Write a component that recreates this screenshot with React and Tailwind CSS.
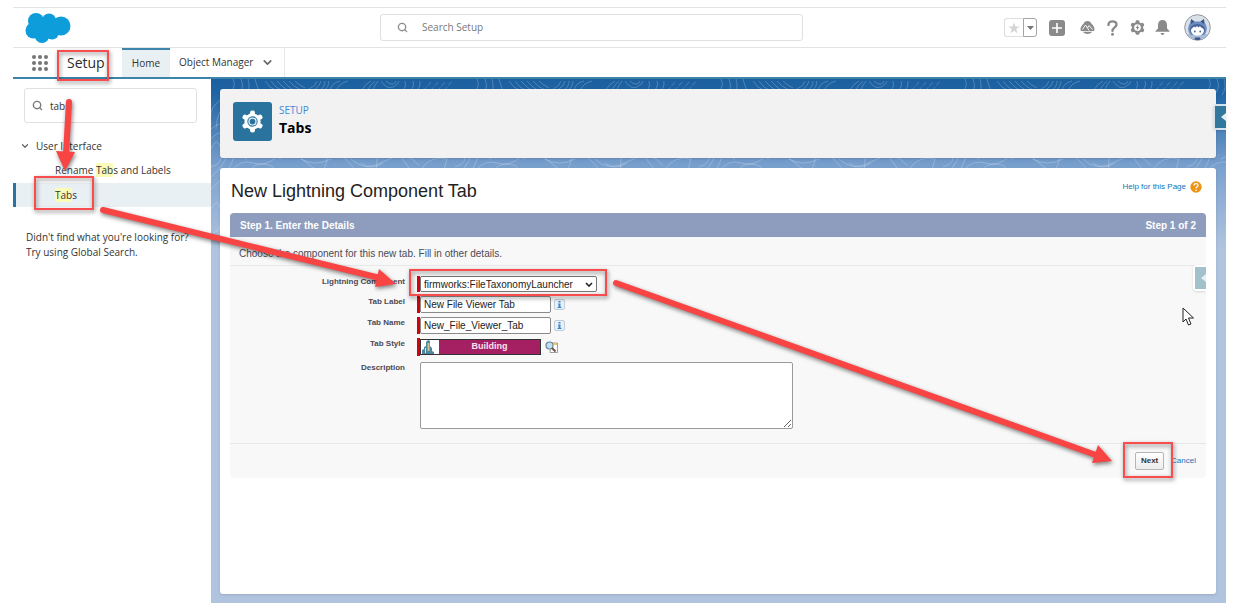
import React from "react";
import { Search, ChevronDown } from "lucide-react";

const DOTS = [0, 1, 2, 3, 4, 5, 6, 7, 8];

function CloudLogo() {
  return (
    <svg className="h-8 w-[46px]" viewBox="0 0 46 32" aria-label="Salesforce" role="img">
      <g fill="#0d9ddb">
        <circle cx="11" cy="9" r="8" />
        <circle cx="24" cy="8.500" r="7" />
        <circle cx="36" cy="14" r="9.500" />
        <circle cx="8.500" cy="18.500" r="8" />
        <circle cx="17" cy="23.500" r="7.500" />
        <circle cx="27" cy="20.500" r="7" />
        <rect x="10" y="8" width="24" height="14" />
      </g>
    </svg>
  );
}

function BoltGear({ className }) {
  return (
    <svg className={className} viewBox="0 0 24 24" aria-hidden="true">
      <g fill="currentColor">
        <circle cx="12" cy="12" r="9" />
        <rect x="9" y="0.500" width="6" height="23" rx="2" />
        <rect x="9" y="0.500" width="6" height="23" rx="2" transform="rotate(60 12 12)" />
        <rect x="9" y="0.500" width="6" height="23" rx="2" transform="rotate(120 12 12)" />
      </g>
      <circle cx="12" cy="12" r="5.400" fill="#fff" />
      <path d="M13.500 7 9 12.800h2.500l-1 4.500 4.500-6h-2.400z" fill="currentColor" />
    </svg>
  );
}

function SetupGear() {
  return (
    <svg className="size-[23px] text-white" viewBox="0 0 24 24" aria-hidden="true">
      <g fill="currentColor">
        <circle cx="12" cy="12" r="8.500" />
        <rect x="9.500" y="0.500" width="5" height="23" rx="2" />
        <rect x="9.500" y="0.500" width="5" height="23" rx="2" transform="rotate(60 12 12)" />
        <rect x="9.500" y="0.500" width="5" height="23" rx="2" transform="rotate(120 12 12)" />
      </g>
      <circle cx="12" cy="12" r="5.400" fill="#2a739e" />
      <circle cx="12" cy="12" r="4.300" fill="#e9f2f7" />
      <circle cx="12" cy="12" r="3" fill="#2a739e" />
    </svg>
  );
}

function Avatar() {
  return (
    <svg className="size-[27px]" viewBox="0 0 27 27" aria-hidden="true">
      <defs>
        <clipPath id="avatar-clip">
          <circle cx="13.500" cy="13.500" r="12.500" />
        </clipPath>
      </defs>
      <circle cx="13.500" cy="13.500" r="12.800" fill="#d9e0e9" stroke="#8f979f" strokeWidth="1" />
      <g clipPath="url(#avatar-clip)">
        <path d="M4 22c0-3 4-4 9.500-4s9.500 1 9.500 4l-2 5H6z" fill="#a9bbd8" />
        <path d="M7 5.500l3.500 2h6l3.500-2 1 3.500c2.500 4 2.500 9-1 12H7c-3.500-3-3.500-8-1-12z" fill="#6c8dc0" />
        <path d="M7 5l3.500 2.500L7 10zM20 5l-3.500 2.500L20 10z" fill="#3c5583" />
        <ellipse cx="13.500" cy="15.500" rx="7.500" ry="5.500" fill="#47669c" />
        <path d="M7 17c0-3 2-3 3-4.500l1.500 1 1.500-1.500 1.500 1.500L16 12l1 1.500c2 .5 3 1.500 3 3.500q-1 4.500-6.500 4.500T7 17z" fill="#fff" />
        <circle cx="10.800" cy="17.500" r="0.900" fill="#47669c" />
        <circle cx="16.200" cy="17.500" r="0.900" fill="#47669c" />
        <path d="M11 23.500h5l1 3.500h-7z" fill="#3c5583" />
      </g>
    </svg>
  );
}

function Topography() {
  return (
    <svg className="absolute inset-x-0 top-0 h-48 w-full" aria-hidden="true">
      <defs>
        <pattern id="topo" width="244" height="192" patternUnits="userSpaceOnUse">
          <g fill="none" stroke="#fff" strokeOpacity="0.220">
            <path d="M22 0q4 8-4 14t-14 12-4 20M30 0q4 9-3 16t-14 12-8 22M37 0q3 9-2 16M44 0q2 8 5 14" />
            <path d="M54 2q4 7 12 10M60 2q4 7 12 10M66 2q6 7 12 10M72 2q6 7 12 10M78 2q5 6 12 9M84 2q4 4 10 7M98 10q7-3 8-8M104 10q5-3 6-8M109 11q5-3 5-9M114 11q4-4 4-9M119 12q1-8 10-10M125 12q3-8 12-10" />
            <path d="M150 12q5-8 10-10M156 12q4-7 8-10M161 13q3-8 6-11M170 2q6 9 12 6t6-6M175 2q4 4 7 3t3-3M192 12q4-5 2-10M199 12q5-5 3-10M206 12q4-5 3-10" />
            <path d="M212 12l9-10M219 12l9-10M226 12l9-10M233 12l8-10" strokeDasharray="5 2" />
            <path d="M0 70q6-14 10 0t-10 18M0 60q12-14 16 4t-16 34M0 50q20-16 24 10t-24 50" />
            <path d="M20 92q10-12 22-8t24-6 30 6 20-4 26 8 24-8 30 6 40-6" />
            <path d="M40 92a12 7 0 1 0 24 0a12 7 0 1 0-24 0M46 89a8 4 0 1 0 14 0M34 80q18-12 36 0M140 80q14 14 34 2t34 4M150 84q10 8 22 0M90 80q14 8 30 0M210 90q10-14 26-10" />
            <path d="M0 130q8-14 10 4t-8 20M232 20q-8 10-2 20t10 18M238 30q-6 10 0 18M226 104q-8 14 4 24t14 6M234 110q-6 10 2 16" />
          </g>
        </pattern>
      </defs>
      <rect width="100%" height="100%" fill="url(#topo)" />
    </svg>
  );
}

function PanelHandle({ className, tone }) {
  return (
    <button
      type="button"
      aria-label="Open panel"
      className={"absolute flex h-[26px] w-[13px] items-center rounded-l border-2 border-r-0 border-white/80 shadow " + className}
    >
      <span className={"flex h-full w-full items-center justify-end " + tone}>
        <svg className="h-2 w-[5px]" viewBox="0 0 5 8" aria-hidden="true">
          <path d="M5 0v8L0 4z" fill="#e6f0f4" />
        </svg>
      </span>
    </button>
  );
}

function InfoButton({ label }) {
  return (
    <button
      type="button"
      aria-label={label}
      className="ml-[3px] flex size-[11px] items-center justify-center rounded-xs border border-[#c3cdd8] bg-[#e9f1f8]"
    >
      <svg className="size-[7px]" viewBox="0 0 7 7" aria-hidden="true">
        <path d="M2.500 0h2v1.500h-2zM2 2.500h2.500V6H5.500v1H1.500V6h1V3.500H2z" fill="#3d86d0" />
      </svg>
    </button>
  );
}

function FormRow({ id, label, height, required, children }) {
  return (
    <div className={"flex " + height}>
      <label htmlFor={id} className="w-[175px] shrink-0 pt-px text-right text-[8px] leading-[10px] font-bold text-[#4a4a56]">
        {label}
      </label>
      <span className={"ml-3 w-[3px] shrink-0 " + (required ? "bg-[#d4000c]" : "")} />
      <div className="flex items-center">{children}</div>
    </div>
  );
}

function Header() {
  return (
    <header className="grid h-[41px] grid-cols-[367px_1fr_423px] items-center border-y border-[#e3e3e3] bg-white">
      <div className="pl-3">
        <CloudLogo />
      </div>
      <label className="flex h-[27px] items-center gap-[14px] rounded-[3px] border border-[#e0e0e0] pl-4">
        <Search className="size-[11px] text-[#8e8e8e]" strokeWidth={3} />
        <input
          type="search"
          aria-label="Search Setup"
          placeholder="Search Setup"
          className="min-w-0 flex-1 text-[10px] outline-none placeholder:text-[#777]"
        />
      </label>
      <div className="flex items-center justify-end pr-[15px] text-[#8a8a8a]">
        <div className="mr-3 flex h-[19px]">
          <button type="button" aria-label="Favorite" className="flex w-[19px] items-center justify-center rounded-l-[3px] border border-r-0 border-[#dedede]">
            <svg className="size-3" viewBox="0 0 24 24" aria-hidden="true">
              <path d="M12 1l3 8h8.500l-7 5.200 2.700 8.300L12 17.500l-7.200 5 2.700-8.300-7-5.200H9z" fill="#d5d5d5" />
            </svg>
          </button>
          <button type="button" aria-label="Favorites list" className="flex w-[14px] items-center justify-center rounded-r-[3px] border border-[#a5a5a5]">
            <svg className="h-1 w-[7px]" viewBox="0 0 7 4" aria-hidden="true">
              <path d="M0 0h7L3.500 4z" fill="#777" />
            </svg>
          </button>
        </div>
        <button type="button" aria-label="Add">
          <svg className="size-4" viewBox="0 0 16 16" aria-hidden="true">
            <rect width="16" height="16" rx="3" fill="currentColor" />
            <path d="M8 3v10M3 8h10" stroke="#fff" strokeWidth="1.600" />
          </svg>
        </button>
        <button type="button" aria-label="Guidance Center" className="ml-[15px]">
          <svg className="size-[15px]" viewBox="0 0 15 15" aria-hidden="true">
            <path d="M7.500 1C9.500 1 11 2 11.500 4c1.500.5 3 3.500 3 5.500 0 1.200-.6 1.500-1.500 1.500H2C1 11 .5 10.700.5 9.500.5 7.500 2 4.500 3.500 4 4 2 5.500 1 7.500 1z" fill="currentColor" />
            <path d="M2.500 9.500l3-4.500 2 3 1.500-2.500 3.500 4M7.500 8l1.500 2.500" fill="none" stroke="#fff" strokeWidth="0.900" />
            <path d="M2.500 11.800h10q-5 4.500-10 0z" fill="currentColor" />
          </svg>
        </button>
        <button type="button" aria-label="Help" className="ml-3">
          <svg className="h-4 w-[11px]" viewBox="0 0 11 16" aria-hidden="true">
            <path d="M1.500 5q0-3.600 4-3.600t4 3.200c0 2.800-4 2.800-4 6.200" fill="none" stroke="currentColor" strokeWidth="2.400" strokeLinecap="round" />
            <circle cx="5.500" cy="14.300" r="1.500" fill="currentColor" />
          </svg>
        </button>
        <button type="button" aria-label="Setup menu" className="ml-3">
          <BoltGear className="size-[15px]" />
        </button>
        <button type="button" aria-label="Notifications" className="ml-[10px]">
          <svg className="size-[15px]" viewBox="0 0 15 15" aria-hidden="true">
            <path d="M7.500 0C10.500 0 12 2 12 5v3.500L14.500 11v.8H.5V11L3 8.500V5c0-3 1.500-5 4.500-5zM5.500 13h4q-.5 2-2 2t-2-2z" fill="currentColor" />
          </svg>
        </button>
        <button type="button" aria-label="Profile" className="ml-[14px]">
          <Avatar />
        </button>
      </div>
    </header>
  );
}

function Nav() {
  return (
    <nav className="flex h-[31px] items-stretch border-b-2 border-[#3d84ad] bg-white text-[10px] text-[#333]">
      <button type="button" aria-label="App Launcher" className="ml-[19px] grid w-4 grid-cols-3 content-center gap-[2px]">
        {DOTS.map((d) => (
          <span key={d} className="size-1 rounded-full bg-[#757575]" />
        ))}
      </button>
      <span className="ml-[19px] w-[55px] self-center text-[14px] text-[#2b2b2b]">Setup</span>
      <a href="#home" className="flex w-12 items-center justify-center border-t-2 border-[#3d84ad] bg-[#e9f0f3]">
        Home
      </a>
      <a href="#objects" className="flex items-center gap-2 border-r border-[#e6e6e6] pr-[10px] pl-[9px]">
        Object Manager
        <ChevronDown className="size-[13px] text-[#666]" strokeWidth={3} />
      </a>
    </nav>
  );
}

function Sidebar() {
  return (
    <aside className="w-[198px] shrink-0 pt-[9px] text-[10px] text-[#333]">
      <label className="mr-[14px] ml-[11px] flex h-[35px] items-center gap-[7px] rounded-[3px] border border-[#e0e0e0] pl-[7px]">
        <Search className="size-[11px] text-[#777]" strokeWidth={3} />
        <input aria-label="Quick Find" defaultValue="tabs" className="h-4 w-24 pt-px text-[10px] outline-none" />
      </label>
      <button type="button" className="mt-[14px] flex h-[18px] items-center gap-[6px] pl-[7px]">
        <ChevronDown className="size-[10px] text-[#666]" strokeWidth={3} />
        User Interface
      </button>
      <ul className="mt-[2px]">
        <li className="flex h-[26px] items-center pl-[42px]">
          <a href="#rename">
            Rename <mark className="bg-[#fbfbb8] text-inherit">Tab</mark>s and Labels
          </a>
        </li>
        <li className="flex h-6 items-center border-l-[3px] border-[#2a739e] bg-[#e9f0f3] pl-[39px]">
          <a href="#tabs">
            <mark className="bg-[#fbfbb8] text-inherit">Tab</mark>s
          </a>
        </li>
      </ul>
      <p className="mt-[23px] pl-[13px] leading-[15px]">
        Didn't find what you're looking for?
        <br />
        Try using Global Search.
      </p>
    </aside>
  );
}

function DetailForm() {
  return (
    <form className="relative overflow-hidden rounded-[4px] bg-[#f8f8f8]">
      <div className="flex h-6 items-center justify-between bg-[#8e9dbe] px-[10px] text-[10px] font-bold text-white">
        <h2>Step 1. Enter the Details</h2>
        <span>Step 1 of 2</span>
      </div>
      <p className="flex h-[29px] items-center border-b border-[#e8e8e8] px-[9px] pt-1 text-[10px] text-[#4a4a56]">
        Choose the component for this new tab. Fill in other details.
      </p>
      <div className="flex flex-col gap-1 pt-[10px] pb-[14px]">
        <FormRow id="component" label="Lightning Component" height="h-4" required>
          <div className="relative">
            <select id="component" className="block h-4 w-[177px] appearance-none rounded-xs border border-[#767676] bg-white pl-[3px] text-[10px] text-[#222]">
              <option>firmworks:FileTaxonomyLauncher</option>
            </select>
            <svg className="pointer-events-none absolute top-[6px] right-1 h-[5px] w-2" viewBox="0 0 8 5" aria-hidden="true">
              <path d="M1 1l3 3 3-3" fill="none" stroke="#222" strokeWidth="1.600" />
            </svg>
          </div>
        </FormRow>
        <FormRow id="tab-label" label="Tab Label" height="h-[17px]" required>
          <input id="tab-label" defaultValue="New File Viewer Tab" className="h-[17px] w-[131px] rounded-xs border border-[#8a8a8a] bg-white pl-[3px] text-[10px] text-[#222]" />
          <InfoButton label="Tab Label help" />
        </FormRow>
        <FormRow id="tab-name" label="Tab Name" height="h-[17px]" required>
          <input id="tab-name" defaultValue="New_File_Viewer_Tab" className="h-[17px] w-[131px] rounded-xs border border-[#8a8a8a] bg-white pl-[3px] text-[10px] text-[#222]" />
          <InfoButton label="Tab Name help" />
        </FormRow>
        <FormRow id="tab-style" label="Tab Style" height="h-[18px] mb-[2px]" required>
          <div className="flex h-4 w-[121px] border border-[#333] bg-[#a52063]">
            <span className="w-[18px] bg-white">
              <svg className="h-[14px] w-[15px]" viewBox="0 0 15 14" aria-hidden="true">
                <path d="M1 14V10l2-1v-2l2-1V2l2-2 2 1v5l2 2v3l2 1v2z" fill="#4f86a0" />
                <path d="M6.500 3h2v8h-2z" fill="#c9c48a" />
                <path d="M4.500 8v5" stroke="#cfe2ec" />
              </svg>
            </span>
            <input id="tab-style" readOnly value="Building" className="w-[101px] text-center text-[9px] font-bold text-[#fbe3ef] outline-none" />
          </div>
          <button type="button" aria-label="Tab Style lookup" className="ml-1">
            <svg className="h-3 w-[13px]" viewBox="0 0 13 12" aria-hidden="true">
              <path d="M6 2h6.500v9.500H5z" fill="#fff" stroke="#888" strokeWidth="0.800" />
              <path d="M8 2h4v2H9z" fill="#e9c063" />
              <circle cx="4.500" cy="4.500" r="3.500" fill="#bfe0f2" stroke="#6d8596" strokeWidth="1.200" />
              <path d="M7 7l3.500 3.500" stroke="#6b5745" strokeWidth="2" />
            </svg>
          </button>
        </FormRow>
        <FormRow id="description" label="Description" height="">
          <textarea id="description" className="block h-[67px] w-[373px] rounded-xs border border-[#9a9a9a] bg-white text-[10px]" />
        </FormRow>
      </div>
      <div className="flex h-[35px] items-center justify-end gap-[7px] border-t border-[#e8e8e8] pr-[10px] text-[8px]">
        <button type="button" className="h-[18px] w-[29px] rounded-xs border border-[#b5b5b5] bg-linear-to-b from-white to-[#ececec] font-bold text-[#333]">
          Next
        </button>
        <a href="#cancel" className="text-[#1673b8]">
          Cancel
        </a>
      </div>
      <PanelHandle className="top-[52px] right-0 bg-white" tone="bg-[#a3c1cb]" />
    </form>
  );
}

function Annotations() {
  return (
    <svg className="pointer-events-none absolute inset-0 h-full w-full" aria-hidden="true">
      <defs>
        <filter id="drop" x="-20%" y="-20%" width="140%" height="140%" colorInterpolationFilters="sRGB">
          <feDropShadow dx="1" dy="2" stdDeviation="2" floodColor="#000" floodOpacity="0.500" />
        </filter>
      </defs>
      <g filter="url(#drop)">
        <g fill="none" stroke="#f94c4c" strokeWidth="2">
          <rect x="58" y="51" width="50" height="29" />
          <rect x="35" y="177" width="58" height="32" />
          <rect x="410" y="270" width="196" height="25" />
          <rect x="1124" y="443" width="48" height="34" />
        </g>
        <g stroke="#f94444" strokeWidth="6" strokeLinecap="round">
          <path d="M69 102L66 154" />
          <path d="M103 210L380 278" />
          <path d="M616 283L1096 455" />
        </g>
        <g fill="#f94444">
          <path d="M56 151L75 152L65 171z" />
          <path d="M379 269L396 284L375 287z" />
          <path d="M1098 445L1112 461L1092 463z" />
        </g>
      </g>
      <path d="M1183 308v14l3-3 2.500 6 2.500-1-2.500-6h5z" fill="#fff" stroke="#222" strokeWidth="1" />
    </svg>
  );
}

export default function App() {
  return (
    <div className="relative flex min-h-screen flex-col bg-white pt-[7px] pr-[10px] pb-3 pl-[13px] font-['Open_Sans',sans-serif]">
      <Header />
      <Nav />
      <div className="flex flex-1">
        <Sidebar />
        <main className="relative flex flex-1 flex-col gap-[10px] bg-[#b0c4df] bg-[linear-gradient(#1b5f9f_0px,#1f64a4_14px,#7da2cf_90px,#b0c4df_170px)] pt-[10px] pr-[10px] pb-[9px] pl-[9px]">
          <Topography />
          <section className="relative flex h-[69px] gap-[7px] rounded-[3px] bg-[#f2f2f2] pt-[13px] pl-[13px] shadow">
            <span className="flex size-[39px] items-center justify-center rounded-[3px] bg-[#2a739e]">
              <SetupGear />
            </span>
            <div>
              <p className="text-[10px] leading-4 text-[#3f8ad6]">SETUP</p>
              <h1 className="text-[14px] leading-5 font-bold text-black">Tabs</h1>
            </div>
          </section>
          <section className="relative flex-1 rounded-[3px] bg-white px-[10px] pt-[9px] font-['Liberation_Sans',Arial,sans-serif] shadow">
            <div className="flex h-9 items-start justify-between">
              <h2 className="pt-1 pl-px text-[18px] leading-5 text-[#222]">New Lightning Component Tab</h2>
              <a href="#help" className="mt-1 mr-1 flex items-center gap-1 text-[8px] text-[#1673b8]">
                Help for this Page
                <svg className="size-3" viewBox="0 0 12 12" aria-hidden="true">
                  <circle cx="6" cy="6" r="5.700" fill="#ee9414" />
                  <path d="M4 4.500Q4 2.700 6 2.700T8 4.400C8 5.800 6 5.800 6 7.400" fill="none" stroke="#fff" strokeWidth="1.200" />
                  <circle cx="6" cy="9.200" r="0.800" fill="#fff" />
                </svg>
              </a>
            </div>
            <DetailForm />
          </section>
          <PanelHandle className="top-[25px] right-0 bg-[#3c76ab]" tone="bg-[#32779c]" />
        </main>
      </div>
      <Annotations />
    </div>
  );
}
